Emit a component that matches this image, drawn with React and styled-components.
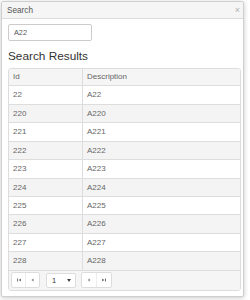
import React from 'react';
import styled, { createGlobalStyle } from 'styled-components';

const Global = createGlobalStyle`
  html, body { margin: 0; padding: 0; background: #fff; }
  body { font-family: "Liberation Sans", Arial, sans-serif; }
`;

const Page = styled.div`
  width: 250px;
  height: 300px;
  box-sizing: border-box;
  padding: 1px 0 0 1px;
`;

const Dialog = styled.div`
  width: 243px;
  height: 296px;
  box-sizing: border-box;
  border: 1px solid #cfcfcf;
  border-radius: 2px;
  box-shadow: 0 1px 5px rgba(0, 0, 0, 0.22);
  background: #fff;
  display: flex;
  flex-direction: column;
  overflow: hidden;
`;

const TitleBar = styled.div`
  height: 17px;
  box-sizing: border-box;
  background: #f5f5f5;
  border-bottom: 1px solid #dcdcdc;
  display: flex;
  align-items: center;
  justify-content: space-between;
  padding: 0 3px 0 5px;
  font-size: 8.2px;
  color: #555;
`;

const Close = styled.span`
  font-size: 9px;
  color: #b0b0b0;
  line-height: 1;
`;

const Body = styled.div`
  flex: 1;
  padding: 5px 1px 4px 6px;
  display: flex;
  flex-direction: column;
`;

const Input = styled.input`
  width: 84px;
  height: 17px;
  box-sizing: border-box;
  border: 1px solid #ccc;
  border-radius: 2px;
  padding: 0 5px;
  font-family: inherit;
  font-size: 7.3px;
  color: #555;
  outline: none;
`;

const Heading = styled.h3`
  margin: 9px 0 5px;
  font-size: 11.8px;
  font-weight: normal;
  line-height: 1.1;
  color: #333;
`;

const Grid = styled.div`
  width: 233px;
  box-sizing: border-box;
  border: 1px solid #ddd;
  border-radius: 3px;
  overflow: hidden;
  font-size: 8px;
  color: #666;
`;

const Row = styled.div`
  display: grid;
  grid-template-columns: 73px 1fr;
  border-bottom: 1px solid #ddd;
  background: ${p => (p.$head ? '#f5f5f5' : p.$striped ? '#f4f4f4' : '#fff')};
`;

const Cell = styled.div`
  line-height: 1.42857;
  padding: ${p => (p.$head ? '2px 4px 3px' : '3px 4px')};
  & + & { border-left: 1px solid #ddd; }
`;

const Pager = styled.div`
  background: #f5f5f5;
  padding: 2px 2px 2px;
  display: flex;
  align-items: center;
  gap: 5px;
  height: 19px;
  box-sizing: border-box;
`;

const Group = styled.div`
  display: flex;
  border: 1px solid #ddd;
  border-radius: 2px;
  background: #fff;
  margin-right: ${p => p.$mr || 0}px;
`;

const PagerButton = styled.div`
  width: ${p => p.$w || 13}px;
  height: 14px;
  display: flex;
  align-items: center;
  justify-content: center;
  & + & { border-left: 1px solid #eee; }
`;

const Select = styled.div`
  width: 30px;
  height: 15px;
  box-sizing: border-box;
  border: 1px solid #ddd;
  border-radius: 2px;
  background: #fff;
  display: flex;
  align-items: center;
  justify-content: space-between;
  padding: 0 4px 0 5px;
  font-size: 7.5px;
  color: #333;
`;

const Icon = ({ type }) => {
  const c = '#777';
  switch (type) {
    case 'first':
      return (
        <svg width="4" height="4" viewBox="0 0 4 4">
          <rect x="0" y="0.5" width="1" height="3" fill={c} />
          <polygon points="4,0.5 4,3.5 1.5,2" fill={c} />
        </svg>
      );
    case 'prev':
      return (
        <svg width="3" height="4" viewBox="0 0 3 4">
          <polygon points="2.5,0.5 2.5,3.5 0.5,2" fill={c} />
        </svg>
      );
    case 'next':
      return (
        <svg width="3" height="4" viewBox="0 0 3 4">
          <polygon points="0.5,0.5 0.5,3.5 2.5,2" fill={c} />
        </svg>
      );
    case 'last':
      return (
        <svg width="4" height="4" viewBox="0 0 4 4">
          <polygon points="0,0.5 0,3.5 2.5,2" fill={c} />
          <rect x="3" y="0.5" width="1" height="3" fill={c} />
        </svg>
      );
    default:
      return (
        <svg width="4" height="3" viewBox="0 0 4 3">
          <polygon points="0,0 4,0 2,3" fill="#444" />
        </svg>
      );
  }
};

const results = ['22', '220', '221', '222', '223', '224', '225', '226', '227', '228'];

export default function App() {
  return (
    <>
      <Global />
      <Page>
        <Dialog>
          <TitleBar>
            <span>Search</span>
            <Close>×</Close>
          </TitleBar>
          <Body>
            <Input defaultValue="A22" readOnly />
            <Heading>Search Results</Heading>
            <Grid>
              <Row $head>
                <Cell $head>Id</Cell>
                <Cell $head>Description</Cell>
              </Row>
              {results.map((id, i) => (
                <Row key={id} $striped={i % 2 === 1}>
                  <Cell>{id}</Cell>
                  <Cell>A{id}</Cell>
                </Row>
              ))}
              <Pager>
                <Group $mr={1}>
                  <PagerButton><Icon type="first" /></PagerButton>
                  <PagerButton><Icon type="prev" /></PagerButton>
                </Group>
                <Select>
                  <span>1</span>
                  <Icon type="caret" />
                </Select>
                <Group>
                  <PagerButton $w={14}><Icon type="next" /></PagerButton>
                  <PagerButton $w={14}><Icon type="last" /></PagerButton>
                </Group>
              </Pager>
            </Grid>
          </Body>
        </Dialog>
      </Page>
    </>
  );
}
